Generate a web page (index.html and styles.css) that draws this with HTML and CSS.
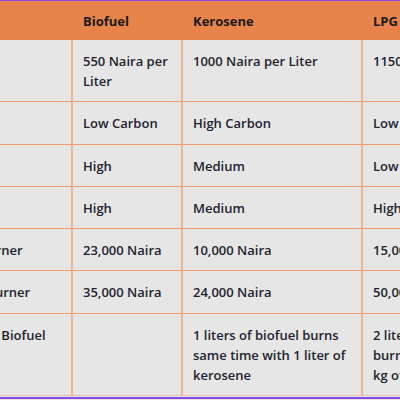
FILE: index.html
```html
<!DOCTYPE html>
<html>
<head>
<meta charset="utf-8">
<link rel="stylesheet" href="styles.css">
</head>
<body>
<div class="frame">
  <table class="compare">
    <colgroup>
      <col class="c0"><col class="c1"><col class="c2"><col class="c3">
    </colgroup>
    <thead>
      <tr><th>Parameter</th><th>Biofuel</th><th>Kerosene</th><th>LPG</th></tr>
    </thead>
    <tbody>
      <tr><td>Price</td><td>550 Naira per Liter</td><td>1000 Naira per Liter</td><td>1150 Naira per Kg</td></tr>
      <tr><td>Emission</td><td>Low Carbon</td><td>High Carbon</td><td>Low Carbon</td></tr>
      <tr><td>Safety</td><td>High</td><td>Medium</td><td>Low</td></tr>
      <tr><td>Efficiency</td><td>High</td><td>Medium</td><td>High</td></tr>
      <tr><td>Cost of Single Burner</td><td>23,000 Naira</td><td>10,000 Naira</td><td>15,000 Naira</td></tr>
      <tr><td>Cost of Double Burner</td><td>35,000 Naira</td><td>24,000 Naira</td><td>50,000 Naira</td></tr>
      <tr><td>Comparison with Biofuel</td><td></td><td>1 liters of biofuel burns same time with 1 liter of kerosene</td><td>2 liters of biofuel burns same time as 1 kg of LPG</td></tr>
    </tbody>
  </table>
  <div class="gap"></div>
</div>
</body>
</html>
```
FILE: styles.css
```css
html, body {
  margin: 0;
  padding: 0;
  background: #e6e6e6;
  overflow: hidden;
  width: 400px;
  height: 400px;
}
.frame {
  border-top: 1px solid #8a4ae8;
  border-bottom: 2px solid #8a4ae8;
  width: 400px;
  box-sizing: border-box;
  overflow: hidden;
  background: #e6e6e6;
}
.compare {
  border-collapse: separate;
  border-spacing: 0;
  table-layout: fixed;
  width: 642px;
  margin-left: -119px;
  font-family: "Open Sans", sans-serif;
  font-size: 13px;
  font-weight: 600;
  color: #23232f;
  line-height: 20px;
}
.c0 { width: 192px; }
.c1 { width: 110px; }
.c2 { width: 180px; }
.c3 { width: 160px; }
.compare th {
  background: #e8844b;
  text-align: left;
  font-weight: 700;
  padding: 10px 11px 9px 10px;
  color: #1a1a1a;
}
.compare td {
  text-align: left;
  vertical-align: top;
  padding: 11px 8px 10.3px 10px;
  border-bottom: 1px solid #ef9c6c;
  border-right: 2px solid #efb696;
  background: #e6e6e6;
}
.compare td:last-child { border-right: none; }
.compare tbody tr:last-child td { border-bottom: 1px solid #e8c2a6; }
.gap { height: 1px; background: #e6e6e6; }
```
